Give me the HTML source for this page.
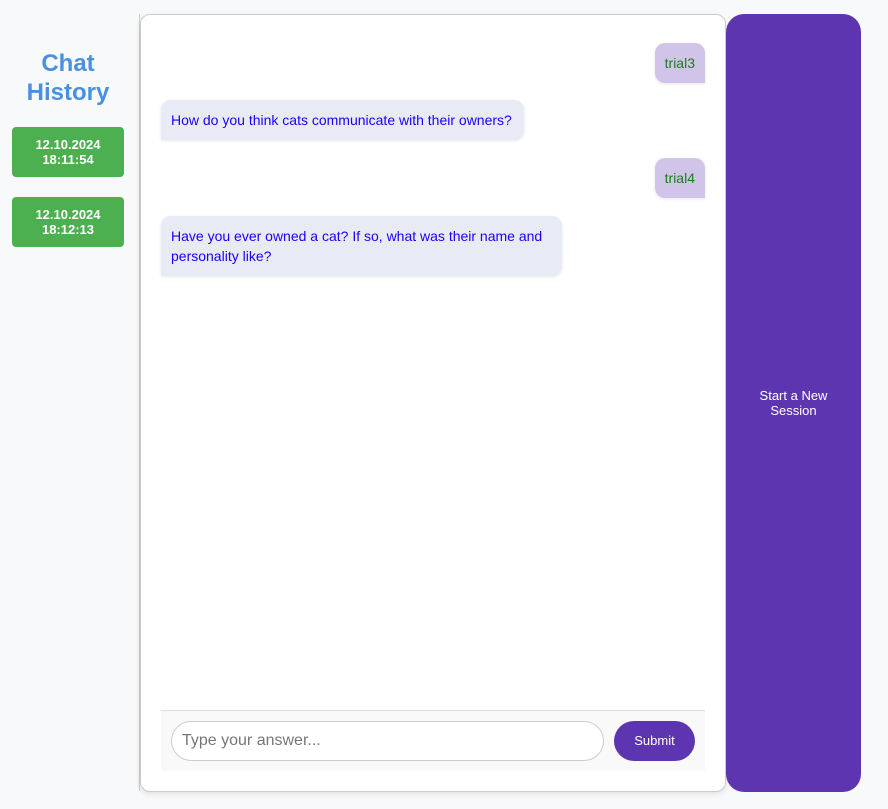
<!DOCTYPE html>
<html><head><style>
*{box-sizing:border-box;margin:0;padding:0}
body{width:888px;height:809px;background:#f8f9fa;font-family:"Liberation Sans",Arial,sans-serif;position:relative;overflow:hidden}
.side{position:absolute;left:0;top:14px;width:140px;height:777px;border-right:1px solid #ccc}
h2{position:absolute;left:0;width:136px;top:49px;text-align:center;color:#4a90e2;font-size:24px;line-height:29px;font-weight:bold}
.hb{position:absolute;left:12px;width:112px;height:50px;background:#4caf50;border-radius:4px;color:#fff;font-size:13px;font-weight:bold;text-align:center;line-height:15px;padding-top:10px}
.chat{position:absolute;left:140px;top:14px;width:586px;height:778px;background:#fff;border:1px solid #ccc;border-radius:10px;box-shadow:0 2px 6px rgba(0,0,0,.1)}
.b{position:absolute;font-size:14px;line-height:20px;padding:10px;border-radius:10px;box-shadow:0 1px 3px rgba(0,0,0,.1)}
.u{background:#d1c4e9;color:#1e7a1e;border-bottom-right-radius:0;right:20px}
.a{background:#e8eaf6;color:#1a00ff;border-bottom-left-radius:0}
.inp{position:absolute;left:20px;top:695px;width:544px;height:61px;background:#f9f9f9;border-top:1px solid #ddd}
.field{position:absolute;left:10px;top:10px;width:433px;height:40px;border:1px solid #ccc;border-radius:20px;background:#fff;color:#777;font-size:16px;line-height:38px;padding-left:10px}
.sub{position:absolute;left:453px;top:10px;width:81px;height:40px;border-radius:20px;background:#5e35b1;color:#fff;font-size:13px;line-height:40px;text-align:center}
.new{position:absolute;left:726px;top:14px;width:135px;height:778px;background:#5e35b1;border-radius:18px;color:#fff;font-size:13px;line-height:15px;text-align:center;padding-top:374px}
</style></head><body>
<div class="side"></div>
<h2>Chat<br>History</h2>
<div class="hb" style="top:127px">12.10.2024<br>18:11:54</div>
<div class="hb" style="top:197px">12.10.2024<br>18:12:13</div>
<div class="chat">
<div class="b u" style="top:28px">trial3</div>
<div class="b a" style="left:20px;top:85px;width:363px">How do you think cats communicate with their owners?</div>
<div class="b u" style="top:143px">trial4</div>
<div class="b a" style="left:20px;top:201px;width:401px">Have you ever owned a cat? If so, what was their name and personality like?</div>
<div class="inp"><div class="field">Type your answer...</div><div class="sub">Submit</div></div>
</div>
<div class="new">Start a New<br>Session</div>
</body></html>
